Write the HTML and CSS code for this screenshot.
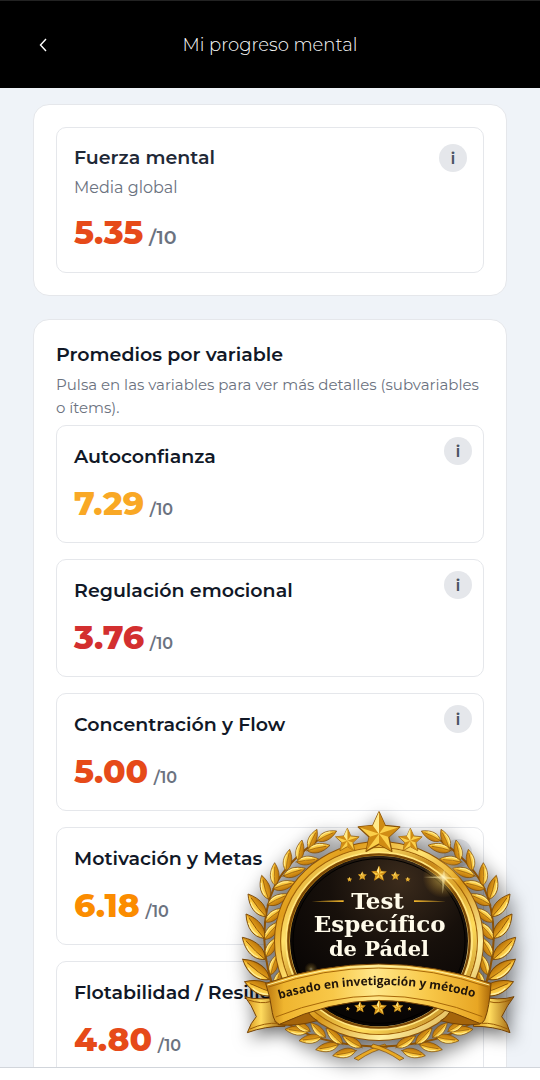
FILE: index.html
```html
<!DOCTYPE html>
<html lang="es">
<head>
  <meta charset="UTF-8">
  <meta name="viewport" content="width=device-width, initial-scale=1.0">
  <title>Mi progreso mental</title>
  <link rel="stylesheet" href="styles.css">
</head>
<body>
  <header class="topbar">
    <button class="back" aria-label="Volver">
      <svg width="8" height="14" viewBox="0 0 8 14"><path d="M7 1 1.5 7 7 13" fill="none" stroke="#fff" stroke-width="1.4"/></svg>
    </button>
    <h1>Mi progreso mental</h1>
  </header>

  <main class="content">
    <section class="panel">
      <article class="card card-global">
        <div class="card-head">
          <h2>Fuerza mental</h2>
          <button class="info" aria-label="Información sobre fuerza mental">i</button>
        </div>
        <p class="sub">Media global</p>
        <p class="score naranja">5.35 <span>/10</span></p>
      </article>
    </section>

    <section class="panel">
      <h2>Promedios por variable</h2>
      <p class="hint">Pulsa en las variables para ver más detalles (subvariables o ítems).</p>
      <div class="lista">
        <article class="card">
          <div class="card-head">
            <h3>Autoconfianza</h3>
            <button class="info" aria-label="Información sobre autoconfianza">i</button>
          </div>
          <p class="score amarillo">7.29 <span>/10</span></p>
        </article>
        <article class="card">
          <div class="card-head">
            <h3>Regulación emocional</h3>
            <button class="info" aria-label="Información sobre regulación emocional">i</button>
          </div>
          <p class="score rojo">3.76 <span>/10</span></p>
        </article>
        <article class="card">
          <div class="card-head">
            <h3>Concentración y Flow</h3>
            <button class="info" aria-label="Información sobre concentración">i</button>
          </div>
          <p class="score naranja">5.00 <span>/10</span></p>
        </article>
        <article class="card">
          <div class="card-head">
            <h3>Motivación y Metas</h3>
            <button class="info" aria-label="Información sobre motivación">i</button>
          </div>
          <p class="score ambar">6.18 <span>/10</span></p>
        </article>
        <article class="card">
          <div class="card-head">
            <h3>Flotabilidad / Resiliencia</h3>
            <button class="info" aria-label="Información sobre resiliencia">i</button>
          </div>
          <p class="score naranja">4.80 <span>/10</span></p>
        </article>
      </div>
    </section>
  </main>
  <footer class="bottombar"></footer>

  <svg class="sello" viewBox="0 0 900 840" role="img" aria-label="Test Específico de Pádel">
    <defs>
      <linearGradient id="oro" x1="0" y1="0" x2="1" y2="1">
        <stop offset="0" stop-color="#f9cb42"/>
        <stop offset=".2" stop-color="#e09d1b"/>
        <stop offset=".38" stop-color="#ffe271"/>
        <stop offset=".55" stop-color="#d99718"/>
        <stop offset=".75" stop-color="#fff0a0"/>
        <stop offset="1" stop-color="#c5820f"/>
      </linearGradient>
      <linearGradient id="aro" x1="0" y1="0" x2="1" y2="1">
        <stop offset="0" stop-color="#d18e14"/>
        <stop offset=".25" stop-color="#ffe16a"/>
        <stop offset=".45" stop-color="#bd7a0d"/>
        <stop offset=".7" stop-color="#ffdc5a"/>
        <stop offset="1" stop-color="#a5650a"/>
      </linearGradient>
      <linearGradient id="cinta" x1="0" x2="1">
        <stop offset="0" stop-color="#b9760e"/>
        <stop offset=".08" stop-color="#efb52f"/>
        <stop offset=".3" stop-color="#f8c849"/>
        <stop offset=".48" stop-color="#ffe789"/>
        <stop offset=".72" stop-color="#f8c849"/>
        <stop offset=".94" stop-color="#e8a624"/>
        <stop offset="1" stop-color="#a96708"/>
      </linearGradient>
      <linearGradient id="cola" x1="0" x2="1">
        <stop offset="0" stop-color="#d08a12"/>
        <stop offset=".4" stop-color="#ffdb5e"/>
        <stop offset="1" stop-color="#925405"/>
      </linearGradient>
      <linearGradient id="hoja" x1="0" y1="0" x2="0" y2="1">
        <stop offset="0" stop-color="#ffdf62"/>
        <stop offset=".48" stop-color="#f8c036"/>
        <stop offset=".52" stop-color="#dc9717"/>
        <stop offset="1" stop-color="#b9750c"/>
      </linearGradient>
      <radialGradient id="fondo" cx=".62" cy=".15" r=".8">
        <stop offset="0" stop-color="#3b2b1c"/>
        <stop offset=".5" stop-color="#17100b"/>
        <stop offset="1" stop-color="#080504"/>
      </radialGradient>
      <radialGradient id="brillo">
        <stop offset="0" stop-color="#fffbe0" stop-opacity=".8"/>
        <stop offset=".3" stop-color="#ffd75a" stop-opacity=".4"/>
        <stop offset="1" stop-color="#ffb52a" stop-opacity="0"/>
      </radialGradient>
      <symbol id="estrella" viewBox="-11 -11 22 22" overflow="visible">
        <path d="M0-10 2.8-3.8 9.5-3.1 4.5 1.5 5.9 8.1 0 4.8-5.9 8.1-4.5 1.5-9.5-3.1-2.8-3.8z" fill="#fbd04a" stroke="#8a5206" stroke-width=".6" stroke-linejoin="round"/>
        <path d="M0 0 0-10 2.8-3.8zM0 0 9.5-3.1 4.5 1.5zM0 0 5.9 8.1 0 4.8zM0 0-5.9 8.1-4.5 1.5zM0 0-9.5-3.1-2.8-3.8z" fill="#d08c14"/>
        <path d="M0 0-2.8-3.8 0-10z" fill="#ffeb8c"/>
      </symbol>
      <path id="curva" d="M120 605Q447 506 774 603"/>
    </defs>

    <g id="laurel"></g>

    <!-- aro y fondo -->
    <ellipse cx="447" cy="423" rx="315" ry="300" fill="#8d5206"/>
    <ellipse cx="447" cy="423" rx="312" ry="297" fill="url(#oro)"/>
    <ellipse cx="447" cy="423" rx="295" ry="280" fill="none" stroke="#a2640a" stroke-width="4"/>
    <ellipse cx="447" cy="423" rx="287" ry="273" fill="none" stroke="url(#aro)" stroke-width="12"/>
    <ellipse cx="447" cy="423" rx="279" ry="266" fill="none" stroke="#ffe680" stroke-width="5"/>
    <ellipse cx="447" cy="423" rx="272" ry="260" fill="none" stroke="#7b4805" stroke-width="7"/>
    <ellipse cx="447" cy="423" rx="267" ry="256" fill="url(#fondo)"/>
    <ellipse cx="447" cy="423" rx="258" ry="247" fill="none" stroke="#000" stroke-width="3"/>
    <circle cx="640" cy="232" r="62" fill="url(#brillo)"/>
    <path d="M580 231 636 229 643 208 645 229 690 238 645 237 638 282 636 236z" fill="#fff2b0" opacity=".5"/>
    <circle cx="243" cy="507" r="20" fill="url(#brillo)" opacity=".6"/>

    <!-- estrellas -->
    <use href="#estrella" x="311" y="81" width="82" height="82"/>
    <use href="#estrella" x="500" y="81" width="82" height="82"/>
    <use href="#estrella" x="375" y="29" width="144" height="144"/>
    <use href="#estrella" x="421" y="196" width="52" height="52"/>
    <use href="#estrella" x="382" y="213" width="30" height="30"/>
    <use href="#estrella" x="481" y="213" width="30" height="30"/>
    <use href="#estrella" x="350" y="230" width="17" height="17"/>
    <use href="#estrella" x="525" y="230" width="17" height="17"/>
    <use href="#estrella" x="421" y="598" width="52" height="52"/>
    <use href="#estrella" x="371" y="603" width="38" height="38"/>
    <use href="#estrella" x="484" y="603" width="38" height="38"/>
    <use href="#estrella" x="347" y="620" width="13" height="13"/>
    <use href="#estrella" x="532" y="620" width="13" height="13"/>

    <path d="M245 304 341 301V306zM648 304 552 301V306z" fill="#f0b52c"/>
    <g class="sello-titulo">
      <text x="443" y="327">Test</text>
      <text x="449" y="395">Específico</text>
      <text class="sello-pie" x="447" y="468">de Pádel</text>
    </g>

    <!-- cinta -->
    <g stroke="#754204" stroke-width="3" stroke-linejoin="round">
      <path d="M45 590Q90 604 160 588L165 679Q105 678 52 698Q62 668 79 650Q65 615 45 590z" fill="url(#cola)"/>
      <path d="M852 590Q808 604 740 588L730 679Q790 678 840 698Q833 668 815 650Q832 615 852 590z" fill="url(#cola)"/>
      <path d="M135 664Q150 610 245 615L228 625Q240 650 262 662Q200 680 145 674z" fill="#a5650b"/>
      <path d="M758 664Q745 610 648 615L664 625Q655 650 632 662Q695 680 750 672z" fill="#a5650b"/>
      <path d="M107 550Q447 434 783 550Q779 622 764 659Q755 675 744 668Q447 532 148 673Q132 667 127 638Q121 590 107 550z" fill="url(#cinta)"/>
    </g>
    <path d="M116 561Q447 447 774 561M137 651Q447 524 757 650" fill="none" stroke="#a86808" stroke-width="3"/>
    <path d="M112 555Q447 441 778 555" fill="none" stroke="#fff0a2" stroke-width="3"/>
    <path d="M55 600Q95 613 120 605M60 687Q105 667 144 670M842 600Q803 613 779 605M833 687Q787 667 756 670" fill="none" stroke="#9a5c07" stroke-width="3"/>
    <text class="sello-lema"><textPath href="#curva" startOffset="49%">basado en invetigación y método</textPath></text>
  </svg>

  <script>
    // cada hoja: base x, base y, punta x, punta y
    const hojas = [
      [262, 122, 320, 93], [236, 146, 261, 88], [205, 182, 216, 120], [168, 212, 179, 148],
      [135, 256, 134, 188], [116, 298, 95, 226], [108, 350, 54, 282], [103, 415, 48, 342],
      [105, 478, 37, 412], [118, 538, 38, 478], [140, 580, 44, 545],
      [232, 152, 300, 136], [200, 186, 266, 177], [160, 228, 226, 205], [130, 266, 196, 246],
      [113, 314, 176, 282], [106, 366, 160, 324], [104, 418, 150, 364], [108, 470, 140, 412],
      [122, 524, 142, 462], [136, 566, 150, 512],
      [235, 694, 165, 688], [275, 711, 207, 722], [325, 734, 257, 749], [377, 752, 308, 767],
      [240, 694, 190, 664], [286, 712, 242, 668], [337, 732, 288, 684], [395, 742, 337, 708]
    ];

    function dibujarHoja([x1, y1, x2, y2]) {
      const largo = Math.hypot(x2 - x1, y2 - y1);
      const giro = Math.atan2(y2 - y1, x2 - x1) * 180 / Math.PI;
      return `<g transform="translate(${x1} ${y1}) rotate(${giro}) scale(${largo / 70})">
        <path d="M0 0C16-19 44-18 70 0C42 18 14 17 0 0z" fill="url(#hoja)" stroke="#7a4705" stroke-width="2"/>
        <path d="M-4 0Q28-3 58 0" fill="none" stroke="#8a5306" stroke-width="2"/>
        <path d="M15-8Q34-14 50-7" fill="none" stroke="#fff0a0" stroke-width="2.5"/>
      </g>`;
    }

    const tallo = '<path d="M142 590C92 480 90 350 136 254Q178 180 262 122M150 655Q250 735 444 740" fill="none" stroke="#8b5106" stroke-width="6"/>';
    const cabo = '<path d="M465 732Q425 742 372 775L385 781Q425 752 472 742z" fill="#e8a924" stroke="#7a4705" stroke-width="2"/>';
    const rama = tallo + hojas.map(dibujarHoja).join('') + cabo;
    document.getElementById('laurel').innerHTML =
      `<g>${rama}</g><g transform="translate(894 0) scale(-1 1)">${rama}</g>`;
  </script>
</body>
</html>
```
FILE: styles.css
```css
* {
  box-sizing: border-box;
}
body {
  position: relative;
  display: flex;
  flex-direction: column;
  height: 100vh;
  margin: 0;
  overflow: hidden;
  background: #eff3f8;
  color: #111827;
  font-family: Montserrat, Inter, "Open Sans", sans-serif;
}
h1, h2, h3, p {
  margin: 0;
}
button {
  padding: 0;
  border: none;
  cursor: pointer;
  font-family: inherit;
}
.topbar {
  display: grid;
  grid-template-columns: 40px 1fr 40px;
  align-items: center;
  flex: none;
  height: 88px;
  padding: 0 23px;
  background: #000;
  border-top: 1px solid #222;
  color: #fff;
}
.topbar h1 {
  font-size: 18px;
  font-weight: 300;
  text-align: center;
}
.back {
  display: flex;
  align-items: center;
  justify-content: center;
  height: 40px;
  background: none;
}
.content {
  display: flex;
  flex-direction: column;
  flex: 1;
  gap: 23px;
  min-height: 0;
  padding: 16px 33px 0;
  overflow: hidden;
}
.panel {
  flex: none;
  padding: 22px;
  background: #fff;
  border: 1px solid #e5e7eb;
  border-radius: 16px;
}
h2, h3 {
  font-size: 19px;
  font-weight: 600;
  line-height: 26px;
}
.hint {
  color: #6b7280;
  font-size: 15px;
  font-weight: 400;
  line-height: 23px;
  margin-top: 5px;
}
.lista {
  display: flex;
  flex-direction: column;
  gap: 16px;
  margin-top: 6px;
}
.card {
  height: 118px;
  padding: 11px 11px 0 17px;
  border: 1px solid #e5e7eb;
  border-radius: 10px;
}
.card-head {
  display: flex;
  justify-content: space-between;
}
.card h3 {
  padding-top: 7px;
}
.info {
  width: 28px;
  height: 28px;
  border-radius: 50%;
  background: #e5e7eb;
  color: #4b5563;
  font-size: 17px;
  font-weight: 600;
  line-height: 28px;
}
.score {
  margin-top: 13px;
  font-size: 33px;
  font-weight: 800;
  line-height: 40px;
}
.score span {
  margin-left: -4px;
  color: #6b7280;
  font-size: 16px;
  font-weight: 600;
}
.card-global {
  height: auto;
  padding: 16px 16px 14px 17px;
}
.card-global .card-head {
  align-items: center;
}
.card-global h2 {
  color: #1f2937;
}
.sub {
  color: #6b7280;
  font-size: 16px;
  font-weight: 400;
  line-height: 32px;
}
.card-global .score {
  margin-top: 8px;
}
.card-global .score span {
  font-size: 19px;
}
.naranja {
  color: #e64a19;
}
.amarillo {
  color: #f9a825;
}
.rojo {
  color: #d32f2f;
}
.ambar {
  color: #fb8c00;
}
.bottombar {
  flex: none;
  height: 13px;
  background: #fff;
  border-top: 1px solid #d1d5db;
}
/* sello flotante */
.sello {
  position: absolute;
  right: 10px;
  bottom: 0;
  width: 300px;
  height: 280px;
  overflow: visible;
  filter: drop-shadow(3px 5px 9px rgba(0, 0, 0, 0.6));
}
.sello-titulo {
  fill: #fffbea;
  font-family: "DejaVu Serif", serif;
  font-size: 69px;
  font-weight: 700;
  text-anchor: middle;
}
.sello-pie {
  font-size: 63px;
}
.sello-lema {
  fill: #21150a;
  font-family: "Open Sans", sans-serif;
  font-size: 36px;
  font-weight: 700;
  text-anchor: middle;
}
```
